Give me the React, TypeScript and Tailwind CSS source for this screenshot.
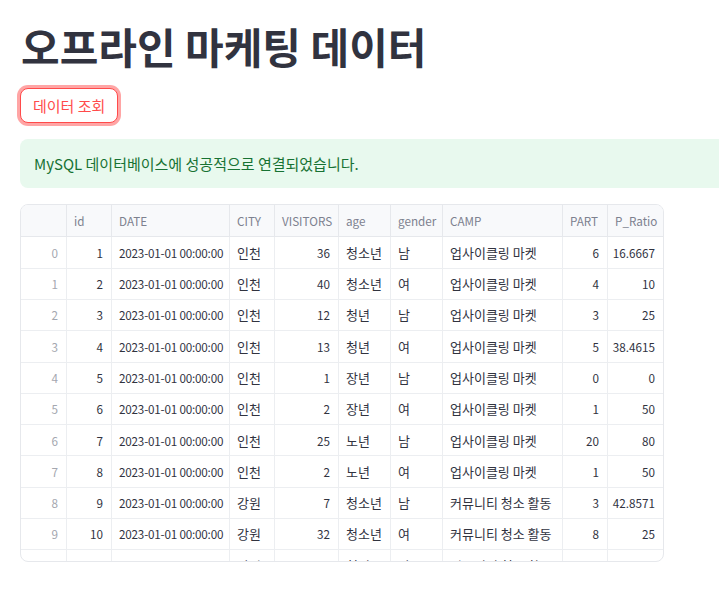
import React from "react"

const font = { fontFamily: '"Noto Sans CJK KR", "Noto Sans", sans-serif' }

type Row = [string, string, string, string, string, string, string, string, string, string]

const columns = [
  { name: "", w: "w-[46px]", align: "right" },
  { name: "id", w: "w-[45px]", align: "right" },
  { name: "DATE", w: "w-[118px]", align: "left" },
  { name: "CITY", w: "w-[45px]", align: "left" },
  { name: "VISITORS", w: "w-[64px]", align: "right" },
  { name: "age", w: "w-[52px]", align: "left" },
  { name: "gender", w: "w-[52px]", align: "left" },
  { name: "CAMP", w: "w-[120px]", align: "left" },
  { name: "PART", w: "w-[45px]", align: "right" },
  { name: "P_Ratio", w: "w-[55px]", align: "right" },
]

const D = "2023-01-01 00:00:00"
const UP = "업사이클링 마켓"
const CM = "커뮤니티 청소 활동"

const rows: Row[] = [
  ["0", "1", D, "인천", "36", "청소년", "남", UP, "6", "16.6667"],
  ["1", "2", D, "인천", "40", "청소년", "여", UP, "4", "10"],
  ["2", "3", D, "인천", "12", "청년", "남", UP, "3", "25"],
  ["3", "4", D, "인천", "13", "청년", "여", UP, "5", "38.4615"],
  ["4", "5", D, "인천", "1", "장년", "남", UP, "0", "0"],
  ["5", "6", D, "인천", "2", "장년", "여", UP, "1", "50"],
  ["6", "7", D, "인천", "25", "노년", "남", UP, "20", "80"],
  ["7", "8", D, "인천", "2", "노년", "여", UP, "1", "50"],
  ["8", "9", D, "강원", "7", "청소년", "남", CM, "3", "42.8571"],
  ["9", "10", D, "강원", "32", "청소년", "여", CM, "8", "25"],
  ["", "", "", "강원", "", "청년", "남", CM, "", ""],
]

const hasHangul = (s: string) => /[\uac00-\ud7a3]/.test(s)

function DataFrame() {
  return (
    <div className="w-[644px] h-[358px] overflow-hidden rounded-lg border border-[#e6e8ec] bg-white">
      <div className="flex h-[32px] bg-[#f8f9fb] border-b border-[#e6e8ec]">
        {columns.map((c, i) => (
          <div
            key={i}
            className={`${c.w} shrink-0 flex items-center px-[7px] text-[11.7px] text-[#7d818f] ${i < columns.length - 1 ? "border-r border-[#e6e8ec]" : ""}`}
          >
            {c.name}
          </div>
        ))}
      </div>
      {rows.map((r, ri) => (
        <div key={ri} className="flex h-[31.3px] border-b border-[#eceef1]">
          {r.map((v, ci) => {
            const c = columns[ci]
            return (
              <div
                key={ci}
                className={`${c.w} shrink-0 flex items-center whitespace-nowrap overflow-hidden ${hasHangul(v) ? "text-[13px]" : "text-[11.7px]"} ${c.align === "right" ? "justify-end px-[8px]" : "justify-start px-[7px]"} ${ci === 0 ? "text-[#a4a7b0]" : "text-[#31333f]"} ${ci === 2 ? "tracking-[-0.2px]" : ""} ${ci < columns.length - 1 ? "border-r border-[#eceef1]" : ""}`}
              >
                {v}
              </div>
            )
          })}
        </div>
      ))}
    </div>
  )
}

export default function App() {
  return (
    <div className="w-[719px] h-[600px] overflow-hidden bg-white" style={font}>
      <div className="w-[800px] pl-[20px] pt-[4px]">
        <h1 className="pt-[17px] pb-[13px] text-[42px] leading-[1.2] font-bold text-[#31333f] pl-[1px]">
          오프라인 마케팅 데이터
        </h1>
        <div className="mt-[4px]">
          <button className="h-[35px] px-[12px] rounded-lg border border-[#ff4b4b] bg-white text-[15px] text-[#ff4b4b] ring-[3px] ring-[#ff4b4b]/50 leading-none">
            데이터 조회
          </button>
        </div>
        <div className="mt-[16px] h-[49px] rounded-lg bg-[#e8f9ee] px-[14px] flex items-center text-[15px] text-[#177233]">
          MySQL 데이터베이스에 성공적으로 연결되었습니다.
        </div>
        <div className="mt-[16px]">
          <DataFrame />
        </div>
      </div>
    </div>
  )
}
